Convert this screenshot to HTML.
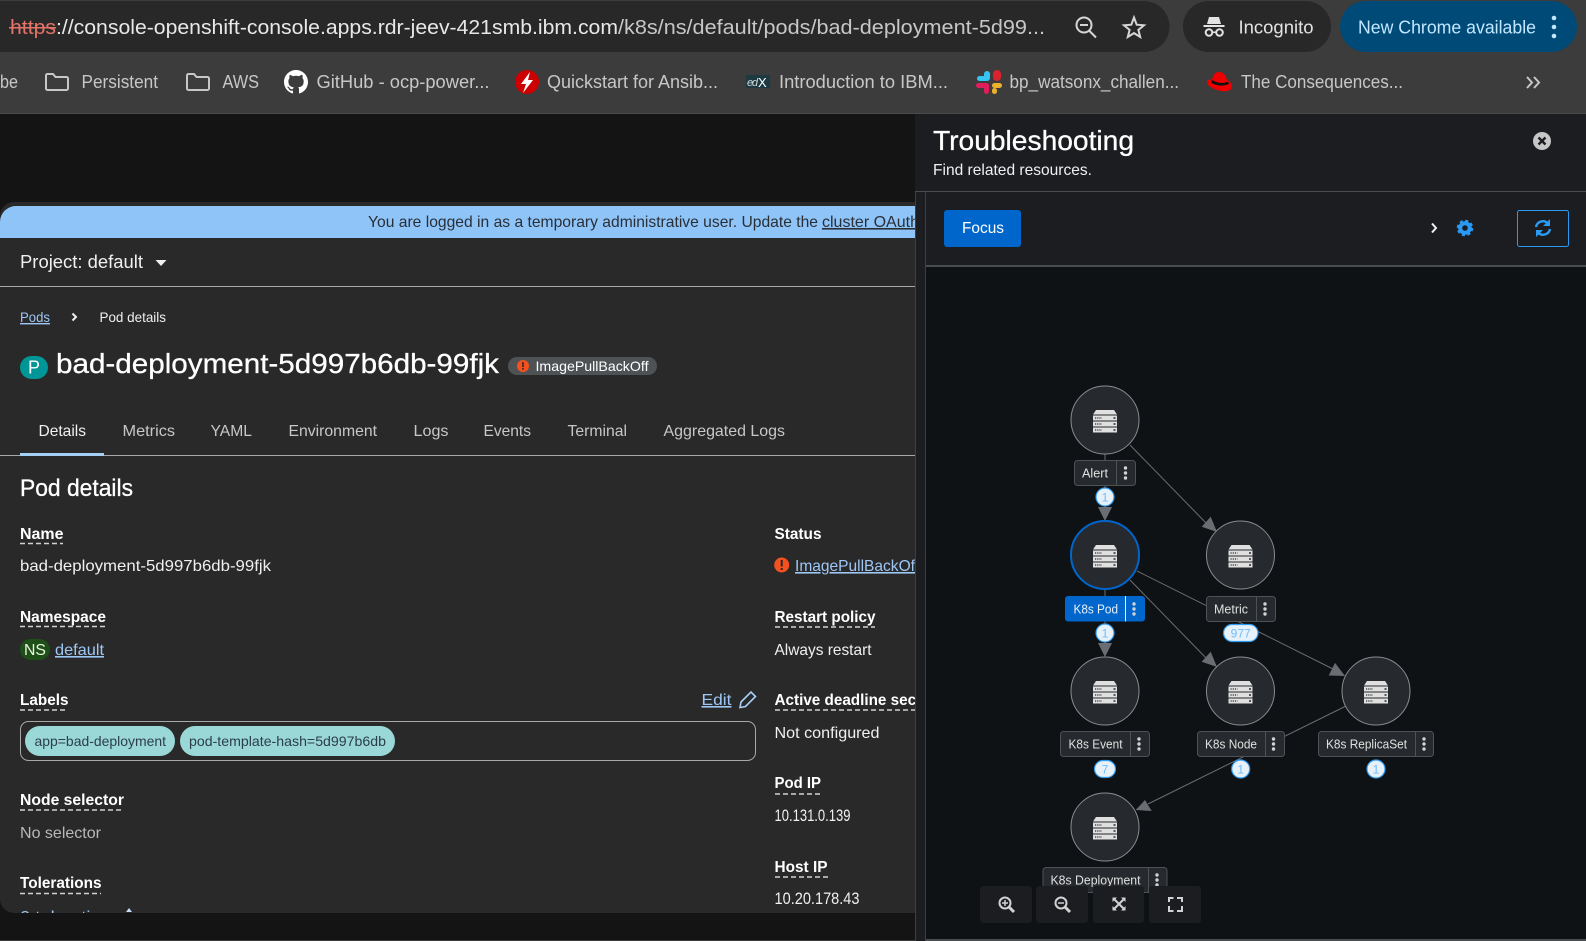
<!DOCTYPE html>
<html><head><meta charset="utf-8"><title>Pod details</title>
<style>
html,body{margin:0;padding:0;background:#141414;overflow:hidden}
svg{display:block}
text{font-family:"Liberation Sans",sans-serif;white-space:pre}
.c{font-size:20px;fill:#c7c7c7}
.b{font-size:18px;fill:#c7c7c7}
.t{font-size:16px;fill:#c7c7c7}
.w{font-size:16px;fill:#f0f0f0}
.h{font-size:16px;font-weight:bold;fill:#fff}
.l{font-size:16px;fill:#9ec7f5;text-decoration:underline}
.n{font-size:13px;fill:#e0e0e0}
.g{font-size:12px;fill:#73bcf7;text-anchor:middle}
.d{stroke:#d2d2d2;stroke-width:1.5;stroke-dasharray:5 3;fill:none}
.e{stroke:#6a6e73;stroke-width:1;fill:none}
.ar{fill:#6a6e73}
.box{fill:#26292d;stroke:#4f5255;stroke-width:1}
.div{stroke:#4f5255;stroke-width:1}
.bd{fill:#e7f1fa;stroke:#2b9af3;stroke-width:1.2}
.ci{fill:#26292d;stroke:#8a8d90;stroke-width:1}
.tb{fill:#1b1d21}
.ic{fill:none;stroke:#d2d2d2;stroke-width:2}
</style></head><body>
<svg width="1586" height="941" viewBox="0 0 1586 941" xmlns="http://www.w3.org/2000/svg">
<defs>
<clipPath id="cp"><rect x="0" y="202" width="915" height="711"/></clipPath>
<g id="srv">
<path d="M-9 -11H9L12 -6.500H-12Z" fill="#e0e0e0"/>
<rect x="-12" y="-5.500" width="24" height="5" fill="#e0e0e0"/>
<rect x="-12" y="0.500" width="24" height="5" fill="#e0e0e0"/>
<rect x="-12" y="6.500" width="24" height="5" fill="#e0e0e0"/>
<path d="M-10 -3H-3M-10 3H-3M-10 9H-3" stroke="#26292d" stroke-width="1.200" stroke-dasharray="1.200 1"/>
<path d="M8.500 -3H10.500M8.500 3H10.500M8.500 9H10.500" stroke="#26292d" stroke-width="1.400"/>
</g>
<g id="dots"><circle cy="-5" r="1.700" fill="#d2d2d2"/><circle r="1.700" fill="#d2d2d2"/><circle cy="5" r="1.700" fill="#d2d2d2"/></g>
<path id="fold" d="M1 2.500A1.500 1.500 0 0 1 2.500 1H8L10.500 4H21.500A1.500 1.500 0 0 1 23 5.500V15.500A1.500 1.500 0 0 1 21.500 17H2.500A1.500 1.500 0 0 1 1 15.500Z" fill="none" stroke="#c7c7c7" stroke-width="2"/>
</defs>

<!-- chrome -->
<rect width="1586" height="113" fill="#3c3c3c"/>
<rect y="113" width="1586" height="1" fill="#4a4a4a"/>
<path d="M0 1H1144A25.500 25.500 0 0 1 1144 52H0Z" fill="#282828"/>
<text x="10" y="34" class="c" style="fill:#e57368" textLength="46" lengthAdjust="spacingAndGlyphs">https</text>
<rect x="9" y="27" width="47" height="1.500" fill="#e57368"/>
<text x="56" y="34" class="c" style="fill:#e8e8e8" textLength="562" lengthAdjust="spacingAndGlyphs">://console-openshift-console.apps.rdr-jeev-421smb.ibm.com</text>
<text x="618" y="34" class="c" textLength="427" lengthAdjust="spacingAndGlyphs">/k8s/ns/default/pods/bad-deployment-5d99...</text>
<g fill="none" stroke="#d6d6d6" stroke-width="2">
<circle cx="1084" cy="25" r="7.500"/><path d="M1089.500 31L1096 37.500"/><path d="M1080 25H1088"/>
<path d="M1134 17.500L1136.700 24.700L1144 25.300L1138.400 29.900L1140.200 37L1134 33.100L1127.800 37L1129.600 29.900L1124 25.300L1131.300 24.700Z"/>
</g>
<rect x="1183" y="1" width="148" height="51" rx="25.500" fill="#282828"/>
<g fill="#e3e3e3">
<path d="M1209 17H1219L1221 24H1207Z"/>
<rect x="1203.500" y="25" width="21" height="2"/>
<circle cx="1209" cy="32.500" r="3.300" fill="none" stroke="#e3e3e3" stroke-width="2"/>
<circle cx="1219.500" cy="32.500" r="3.300" fill="none" stroke="#e3e3e3" stroke-width="2"/>
<rect x="1212" y="31.500" width="4" height="1.500"/>
</g>
<text x="1238.500" y="33.500" class="c" style="fill:#e3e3e3;font-size:18px" textLength="75" lengthAdjust="spacingAndGlyphs">Incognito</text>
<rect x="1340" y="1" width="237" height="51" rx="25.500" fill="#004a77"/>
<text x="1358" y="33.500" class="c" style="fill:#c2e7ff;font-size:18px" textLength="178" lengthAdjust="spacingAndGlyphs">New Chrome available</text>
<g fill="#c2e7ff"><circle cx="1554" cy="18" r="2.300"/><circle cx="1554" cy="27" r="2.300"/><circle cx="1554" cy="36" r="2.300"/></g>

<!-- bookmarks -->
<text x="0" y="88" class="b" textLength="18" lengthAdjust="spacingAndGlyphs">be</text>
<use href="#fold" x="45" y="73"/>
<text x="81.500" y="88" class="b" textLength="76.500" lengthAdjust="spacingAndGlyphs">Persistent</text>
<use href="#fold" x="186" y="73"/>
<text x="222.500" y="88" class="b" textLength="36.500" lengthAdjust="spacingAndGlyphs">AWS</text>
<path transform="translate(284 70) scale(1.500)" fill="#fff" d="M8 0C3.580 0 0 3.580 0 8c0 3.540 2.290 6.530 5.470 7.590.4.070.55-.17.55-.38 0-.19-.01-.82-.01-1.490-2.010.37-2.530-.49-2.690-.94-.09-.23-.48-.94-.82-1.130-.28-.15-.68-.52-.01-.53.63-.01 1.080.58 1.230.82.72 1.210 1.870.87 2.330.66.07-.52.28-.87.51-1.070-1.780-.2-3.640-.89-3.640-3.950 0-.87.31-1.590.82-2.150-.08-.2-.36-1.020.08-2.120 0 0 .67-.21 2.200.82.64-.18 1.320-.27 2-.27.68 0 1.360.09 2 .27 1.530-1.040 2.200-.82 2.200-.82.44 1.100.16 1.920.08 2.120.51.56.82 1.270.82 2.150 0 3.070-1.870 3.750-3.650 3.950.29.25.54.73.54 1.480 0 1.070-.01 1.930-.01 2.200 0 .21.15.46.55.38A8.013 8.013 0 0016 8c0-4.420-3.580-8-8-8z"/>
<text x="316.500" y="88" class="b" textLength="173" lengthAdjust="spacingAndGlyphs">GitHub - ocp-power...</text>
<circle cx="527" cy="82" r="12" fill="#c00"/>
<path d="M530 72L521 84H526L523 93L533 80H528Z" fill="#fff"/>
<text x="547" y="88" class="b" textLength="171" lengthAdjust="spacingAndGlyphs">Quickstart for Ansib...</text>
<rect x="746" y="75" width="24" height="13" fill="#1d3a42"/>
<text x="747" y="86" style="font-size:11px;font-style:italic;fill:#d0d8d8" textLength="11">ed</text>
<text x="758" y="87" style="font-size:13px;fill:#fff" textLength="10">X</text>
<text x="779" y="88" class="b" textLength="169" lengthAdjust="spacingAndGlyphs">Introduction to IBM...</text>
<g>
<rect x="984" y="71" width="6" height="10" rx="3" fill="#36c5f0"/>
<rect x="993" y="70" width="8" height="11" rx="4" fill="#d9232e"/>
<rect x="977" y="76" width="11" height="5" rx="2.500" fill="#36c5f0"/>
<rect x="976" y="83" width="12" height="5" rx="2.500" fill="#e01e5a"/>
<rect x="984" y="83" width="5" height="11" rx="2.500" fill="#e01e5a"/>
<rect x="992" y="83" width="10" height="5" rx="2.500" fill="#ecb22e"/>
<rect x="992" y="88" width="5" height="6" rx="2.500" fill="#ecb22e"/>
</g>
<text x="1009.500" y="88" class="b" textLength="169.500" lengthAdjust="spacingAndGlyphs">bp_watsonx_challen...</text>
<path d="M1212 80C1213 75 1215 72 1219 72C1223 72 1226 75 1227 80C1230 82 1233 84 1232 87C1231 92 1223 92 1217 90C1211 88 1207 85 1207 82C1207 80 1209 79 1212 80Z" fill="#e00"/>
<path d="M1212 80C1217 83 1223 84 1228 81.500L1229 84C1223 86.500 1216 86 1211 82.500Z" fill="#111"/>
<text x="1241" y="88" class="b" textLength="162" lengthAdjust="spacingAndGlyphs">The Consequences...</text>
<path d="M1527 77L1532 82.500L1527 88M1534 77L1539 82.500L1534 88" fill="none" stroke="#c7c7c7" stroke-width="2"/>

<!-- left page -->
<g clip-path="url(#cp)">
<rect x="0" y="202" width="930" height="711" rx="14" fill="#292929"/>
<path d="M0 222A16 16 0 0 1 16 206H915V238H0Z" fill="#8fc4f9"/>
<text x="368" y="227" style="font-size:16px;fill:#2a2f36" textLength="450" lengthAdjust="spacingAndGlyphs">You are logged in as a temporary administrative user. Update the</text>
<text x="822" y="227" style="font-size:16px;fill:#2a2f36;text-decoration:underline" textLength="97" lengthAdjust="spacingAndGlyphs">cluster OAuth</text>
<text x="20" y="268" style="font-size:18px;fill:#f0f0f0" textLength="123" lengthAdjust="spacingAndGlyphs">Project: default</text>
<path d="M155.500 260H166.500L161 266Z" fill="#f0f0f0"/>
<rect x="0" y="286" width="915" height="1" fill="#a8a8a8"/>
<text x="20" y="322" class="l" style="font-size:14px" textLength="30" lengthAdjust="spacingAndGlyphs">Pods</text>
<path d="M72.500 313.500L76 317L72.500 320.500" fill="none" stroke="#f0f0f0" stroke-width="2"/>
<text x="99.500" y="322" style="font-size:14px;fill:#f0f0f0" textLength="66.500" lengthAdjust="spacingAndGlyphs">Pod details</text>
<rect x="20" y="356" width="28" height="23" rx="11.500" fill="#009596"/>
<text x="34" y="373.500" text-anchor="middle" style="font-size:18px;fill:#fff">P</text>
<text x="56" y="373" style="font-size:28px;fill:#fff;stroke:#fff;stroke-width:.3" textLength="443" lengthAdjust="spacingAndGlyphs">bad-deployment-5d997b6db-99fjk</text>
<rect x="508" y="357" width="149" height="18" rx="9" fill="#4f5255"/>
<circle cx="523" cy="366" r="6" fill="#f4511e"/>
<rect x="522.200" y="362" width="1.600" height="5" fill="#292929"/><rect x="522.200" y="368" width="1.600" height="1.600" fill="#292929"/>
<text x="535.500" y="371" style="font-size:14px;fill:#fff" textLength="113" lengthAdjust="spacingAndGlyphs">ImagePullBackOff</text>

<text x="38.500" y="436" class="w" textLength="47.500" lengthAdjust="spacingAndGlyphs">Details</text>
<text x="122.500" y="436" class="t" textLength="52.500" lengthAdjust="spacingAndGlyphs">Metrics</text>
<text x="210.500" y="436" class="t" textLength="41.500" lengthAdjust="spacingAndGlyphs">YAML</text>
<text x="288.500" y="436" class="t" textLength="88.500" lengthAdjust="spacingAndGlyphs">Environment</text>
<text x="413.500" y="436" class="t" textLength="35" lengthAdjust="spacingAndGlyphs">Logs</text>
<text x="483.500" y="436" class="t" textLength="47.500" lengthAdjust="spacingAndGlyphs">Events</text>
<text x="567.500" y="436" class="t" textLength="59.500" lengthAdjust="spacingAndGlyphs">Terminal</text>
<text x="663.500" y="436" class="t" textLength="121.500" lengthAdjust="spacingAndGlyphs">Aggregated Logs</text>
<rect x="0" y="455" width="915" height="1" fill="#a8a8a8"/>
<rect x="20" y="453" width="84" height="3" fill="#a6cff5"/>

<text x="20" y="496" style="font-size:24px;fill:#fff;stroke:#fff;stroke-width:.3" textLength="113" lengthAdjust="spacingAndGlyphs">Pod details</text>

<text x="20" y="539" class="h" textLength="43.500" lengthAdjust="spacingAndGlyphs">Name</text>
<path class="d" d="M20 543.500H63"/>
<text x="20" y="571" class="w" textLength="251" lengthAdjust="spacingAndGlyphs">bad-deployment-5d997b6db-99fjk</text>
<text x="20" y="622" class="h" textLength="86" lengthAdjust="spacingAndGlyphs">Namespace</text>
<path class="d" d="M20 626.500H106"/>
<rect x="20" y="639" width="30" height="21" rx="10.500" fill="#1e4f18"/>
<text x="35" y="655" text-anchor="middle" style="font-size:16px;fill:#e8f5e0" textLength="22" lengthAdjust="spacingAndGlyphs">NS</text>
<text x="55" y="655" class="l" textLength="49" lengthAdjust="spacingAndGlyphs">default</text>
<text x="20" y="705" class="h" textLength="48.500" lengthAdjust="spacingAndGlyphs">Labels</text>
<path class="d" d="M20 710H68"/>
<text x="701.500" y="705" class="l" textLength="30" lengthAdjust="spacingAndGlyphs">Edit</text>
<path d="M741 702L751 692L755.500 696.500L745.500 706.500L740 707.500Z" fill="none" stroke="#a6cff5" stroke-width="1.600"/>
<rect x="20.500" y="721.500" width="735" height="39" rx="8" fill="none" stroke="#a8a8a8"/>
<rect x="25" y="726" width="150" height="30" rx="15" fill="#9ad8d8"/>
<rect x="180" y="726" width="215" height="30" rx="15" fill="#9ad8d8"/>
<text x="34.500" y="746" style="font-size:14px;fill:#2c3e48" textLength="131.500" lengthAdjust="spacingAndGlyphs">app=bad-deployment</text>
<text x="189" y="746" style="font-size:14px;fill:#2c3e48" textLength="197" lengthAdjust="spacingAndGlyphs">pod-template-hash=5d997b6db</text>
<text x="20" y="805" class="h" textLength="104" lengthAdjust="spacingAndGlyphs">Node selector</text>
<path class="d" d="M20 810H123"/>
<text x="20" y="838" class="t" style="fill:#b8b8b8" textLength="81" lengthAdjust="spacingAndGlyphs">No selector</text>
<text x="20" y="888" class="h" textLength="81.500" lengthAdjust="spacingAndGlyphs">Tolerations</text>
<path class="d" d="M20 893.500H101"/>
<text x="20" y="922" class="l" textLength="100" lengthAdjust="spacingAndGlyphs">0 tolerations</text>
<path d="M126 912L129 908L132 912Z" fill="#c4dcf5"/>

<text x="774.500" y="539" class="h" textLength="47" lengthAdjust="spacingAndGlyphs">Status</text>
<circle cx="781.700" cy="565" r="7.500" fill="#f4511e"/>
<rect x="780.700" y="560" width="2" height="6.500" fill="#292929"/><rect x="780.700" y="568" width="2" height="2" fill="#292929"/>
<text x="795" y="571" class="l" textLength="124" lengthAdjust="spacingAndGlyphs">ImagePullBackOff</text>
<text x="774.500" y="622" class="h" textLength="101" lengthAdjust="spacingAndGlyphs">Restart policy</text>
<path class="d" d="M775 627H875"/>
<text x="774.500" y="655" class="w" textLength="97" lengthAdjust="spacingAndGlyphs">Always restart</text>
<text x="774.500" y="705" class="h" textLength="178" lengthAdjust="spacingAndGlyphs">Active deadline seconds</text>
<path class="d" d="M775 710H915"/>
<text x="774.500" y="738" class="w" textLength="105" lengthAdjust="spacingAndGlyphs">Not configured</text>
<text x="774.500" y="788" class="h" textLength="46.500" lengthAdjust="spacingAndGlyphs">Pod IP</text>
<path class="d" d="M775 794H821"/>
<text x="774.500" y="821" class="w" style="font-size:17px" textLength="76" lengthAdjust="spacingAndGlyphs">10.131.0.139</text>
<text x="774.500" y="872" class="h" textLength="53" lengthAdjust="spacingAndGlyphs">Host IP</text>
<path class="d" d="M775 877H828"/>
<text x="774.500" y="904" class="w" style="font-size:17px" textLength="85" lengthAdjust="spacingAndGlyphs">10.20.178.43</text>
</g>
<rect y="940" width="915" height="1" fill="#3a3a3a"/>

<!-- right panel -->
<rect x="915" y="114" width="671" height="827" fill="#1b1d21"/>
<rect x="915" y="191" width="1" height="750" fill="#3c3f42"/>
<rect x="925" y="191" width="1" height="750" fill="#3c3f42"/>
<rect x="915" y="191" width="671" height="1" fill="#4a4c50"/>
<text x="933" y="150" style="font-size:28px;fill:#fff;stroke:#fff;stroke-width:.3" textLength="201" lengthAdjust="spacingAndGlyphs">Troubleshooting</text>
<text x="933" y="175" style="font-size:16px;fill:#f0f0f0" textLength="159" lengthAdjust="spacingAndGlyphs">Find related resources.</text>
<circle cx="1542" cy="141" r="9" fill="#c7c7c7"/>
<path d="M1538.500 137.500L1545.500 144.500M1545.500 137.500L1538.500 144.500" stroke="#1b1d21" stroke-width="2.400"/>
<rect x="944" y="210" width="77" height="37" rx="3" fill="#06c"/>
<text x="962" y="233" style="font-size:16px;fill:#fff" textLength="42" lengthAdjust="spacingAndGlyphs">Focus</text>
<path d="M1432 223.500L1436 228L1432 232.500" fill="none" stroke="#f0f0f0" stroke-width="2"/>
<circle cx="1465" cy="228" r="4.800" fill="none" stroke="#2b9af3" stroke-width="4"/>
<circle cx="1465" cy="228" r="7" fill="none" stroke="#2b9af3" stroke-width="2.500" stroke-dasharray="3 2.500"/>
<rect x="1517.500" y="210.500" width="51" height="36" rx="2" fill="none" stroke="#2b9af3"/>
<path d="M1536 227A7 7 0 0 1 1548 223.500M1550 229A7 7 0 0 1 1538 232.500" fill="none" stroke="#2b9af3" stroke-width="2.400"/>
<path d="M1550 219V226H1543ZM1536 237V230H1543Z" fill="#2b9af3"/>

<rect x="926" y="265" width="660" height="2" fill="#4a4c50"/>
<rect x="926" y="267" width="660" height="672" fill="#0f1214"/>
<rect x="926" y="939" width="660" height="2" fill="#4a4c50"/>

<!-- edges -->
<path class="e" d="M1105 454V507"/>
<path class="ar" d="M1098 507H1112L1105 521Z"/>
<path class="e" d="M1130 445L1208 525"/>
<path class="ar" d="M1217 532L1201.700 526.700L1210.700 516.700Z"/>
<path class="e" d="M1105 589V643"/>
<path class="ar" d="M1098 643H1112L1105 657Z"/>
<path class="e" d="M1130 580L1208 660"/>
<path class="ar" d="M1217 667L1201.700 661.700L1210.700 651.700Z"/>
<path class="e" d="M1137 571L1333 669"/>
<path class="ar" d="M1345 676L1328.700 675.500L1335 662.900Z"/>
<path class="e" d="M1346 706L1148 804"/>
<path class="ar" d="M1135.700 810L1151.700 811L1145 800Z"/>

<!-- nodes -->
<circle class="ci" cx="1105" cy="420" r="34"/><use href="#srv" x="1105" y="421"/>
<circle cx="1105" cy="555" r="34" fill="#26292d" stroke="#06c" stroke-width="2"/><use href="#srv" x="1105" y="556"/>
<circle class="ci" cx="1240.500" cy="555" r="34"/><use href="#srv" x="1240.500" y="556"/>
<circle class="ci" cx="1105" cy="691" r="34"/><use href="#srv" x="1105" y="692"/>
<circle class="ci" cx="1240.500" cy="691" r="34"/><use href="#srv" x="1240.500" y="692"/>
<circle class="ci" cx="1376" cy="691" r="34"/><use href="#srv" x="1376" y="692"/>
<circle class="ci" cx="1105" cy="827" r="34"/><use href="#srv" x="1105" y="828"/>

<!-- labels -->
<rect class="box" x="1074.500" y="460.500" width="61" height="25" rx="3"/><path class="div" d="M1116.500 460.500V485.500"/>
<text x="1082" y="477.500" class="n" textLength="26" lengthAdjust="spacingAndGlyphs">Alert</text><use href="#dots" x="1125.500" y="473"/>

<rect x="1065" y="596" width="80" height="25.500" rx="3" fill="#06c"/><rect x="1125" y="596" width="1" height="25.500" fill="#e8f0fa"/>
<text x="1073.500" y="613.500" class="n" style="fill:#e8f0fa" textLength="44.500" lengthAdjust="spacingAndGlyphs">K8s Pod</text><use href="#dots" x="1134" y="609"/>

<rect class="box" x="1206.500" y="596.500" width="69" height="25" rx="3"/><path class="div" d="M1256.500 596.500V621.500"/>
<text x="1214" y="613.500" class="n" textLength="34" lengthAdjust="spacingAndGlyphs">Metric</text><use href="#dots" x="1265" y="609"/>

<rect class="box" x="1060.500" y="731.500" width="89" height="25" rx="3"/><path class="div" d="M1130.500 731.500V756.500"/>
<text x="1068.500" y="748.500" class="n" textLength="54" lengthAdjust="spacingAndGlyphs">K8s Event</text><use href="#dots" x="1139" y="744"/>

<rect class="box" x="1197.500" y="731.500" width="87" height="25" rx="3"/><path class="div" d="M1265.500 731.500V756.500"/>
<text x="1205" y="748.500" class="n" textLength="52" lengthAdjust="spacingAndGlyphs">K8s Node</text><use href="#dots" x="1273.500" y="744"/>

<rect class="box" x="1318.500" y="731.500" width="115" height="25" rx="3"/><path class="div" d="M1415.500 731.500V756.500"/>
<text x="1326" y="748.500" class="n" textLength="81" lengthAdjust="spacingAndGlyphs">K8s ReplicaSet</text><use href="#dots" x="1424" y="744"/>

<rect class="box" x="1043" y="867.500" width="124" height="25" rx="3"/><path class="div" d="M1148.500 867.500V892.500"/>
<text x="1050.500" y="884.500" class="n" textLength="90" lengthAdjust="spacingAndGlyphs">K8s Deployment</text><use href="#dots" x="1157" y="880"/>

<!-- badges -->
<circle class="bd" cx="1105" cy="497" r="9"/><text x="1105" y="501.500" class="g">1</text>
<circle class="bd" cx="1105" cy="633" r="9"/><text x="1105" y="637.500" class="g">1</text>
<rect class="bd" x="1223.500" y="624.500" width="34.500" height="17" rx="8.500"/><text x="1240.700" y="637.500" class="g">977</text>
<rect class="bd" x="1094.500" y="760.500" width="21" height="17" rx="8.500"/><text x="1105" y="773.500" class="g">7</text>
<circle class="bd" cx="1240.700" cy="769" r="9"/><text x="1240.700" y="773.500" class="g">1</text>
<circle class="bd" cx="1376" cy="769" r="9"/><text x="1376" y="773.500" class="g">1</text>

<!-- zoom toolbar -->
<rect class="tb" x="980" y="886" width="52" height="37" rx="3"/>
<rect class="tb" x="1036" y="886" width="52" height="37" rx="3"/>
<rect class="tb" x="1093" y="886" width="51" height="37" rx="3"/>
<rect class="tb" x="1149" y="886" width="52" height="37" rx="3"/>
<g class="ic">
<circle cx="1005" cy="903" r="5.500"/><path d="M1009 907L1014 912" stroke-width="3"/><path d="M1002 903H1008M1005 900V906" stroke-width="1.500"/>
<circle cx="1061" cy="903" r="5.500"/><path d="M1065 907L1070 912" stroke-width="3"/><path d="M1058 903H1064" stroke-width="1.500"/>
<path d="M1114 899L1124 909M1124 899L1114 909"/>
</g>
<path d="M1112.500 897.500H1117L1112.500 902ZM1125.500 897.500V902L1121 897.500ZM1112.500 910.500V906L1117 910.500ZM1125.500 910.500H1121L1125.500 906Z" fill="#d2d2d2"/>
<path d="M1169 902V898H1173.500M1177 898H1182V902M1182 906V911H1177M1173.500 911H1169V906" fill="none" stroke="#d2d2d2" stroke-width="2"/>
</svg>
</body></html>
